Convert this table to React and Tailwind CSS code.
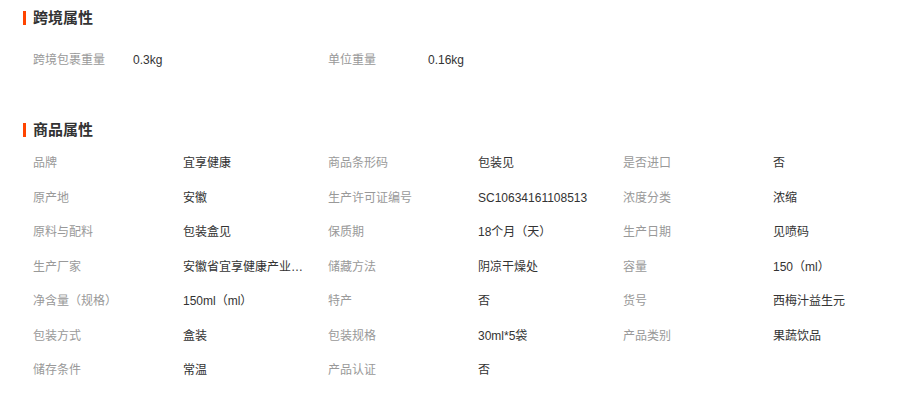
import React from 'react';

const crossBorder = [
  ['跨境包裹重量', '0.3kg'],
  ['单位重量', '0.16kg'],
];

const attrs = [
  ['品牌', '宜享健康'],
  ['商品条形码', '包装见'],
  ['是否进口', '否'],
  ['原产地', '安徽'],
  ['生产许可证编号', 'SC10634161108513'],
  ['浓度分类', '浓缩'],
  ['原料与配料', '包装盒见'],
  ['保质期', '18个月（天）'],
  ['生产日期', '见喷码'],
  ['生产厂家', '安徽省宜享健康产业有限公司'],
  ['储藏方法', '阴凉干燥处'],
  ['容量', '150（ml）'],
  ['净含量（规格）', '150ml（ml）'],
  ['特产', '否'],
  ['货号', '西梅汁益生元'],
  ['包装方式', '盒装'],
  ['包装规格', '30ml*5袋'],
  ['产品类别', '果蔬饮品'],
  ['储存条件', '常温'],
  ['产品认证', '否'],
];

function Title({ children, className }) {
  return (
    <div className={`flex items-center h-[30px] ${className || ''}`}>
      <span className="w-[3px] h-[14px] bg-[#ff4400]" />
      <h3 className="ml-[7px] text-[15px] font-bold text-[#333]">{children}</h3>
    </div>
  );
}

export default function App() {
  return (
    <div
      className="w-[905px] h-[402px] bg-white pl-[23px] pt-[3px] overflow-hidden"
      style={{ fontFamily: '"Liberation Sans", "Noto Sans CJK SC", sans-serif' }}
    >
      {/* 跨境属性 */}
      <Title>跨境属性</Title>
      <div className="flex mt-[10px] pl-[10px] text-[12px]">
        {crossBorder.map(([k, v]) => (
          <div key={k} className="flex items-center h-[34px] w-[295px]">
            <span className="w-[100px] text-[#999]">{k}</span>
            <span className="text-[#333]">{v}</span>
          </div>
        ))}
      </div>

      {/* 商品属性 */}
      <Title className="mt-[38px]">商品属性</Title>
      <div className="grid grid-cols-[295px_295px_295px] pl-[10px] pt-[1px] text-[12px]">
        {attrs.map(([k, v]) => (
          <div key={k} className="flex items-center h-[34.5px]">
            <span className="w-[150px] text-[#999] shrink-0">{k}</span>
            <span className="w-[128px] text-[#333] truncate">{v}</span>
          </div>
        ))}
      </div>
    </div>
  );
}
